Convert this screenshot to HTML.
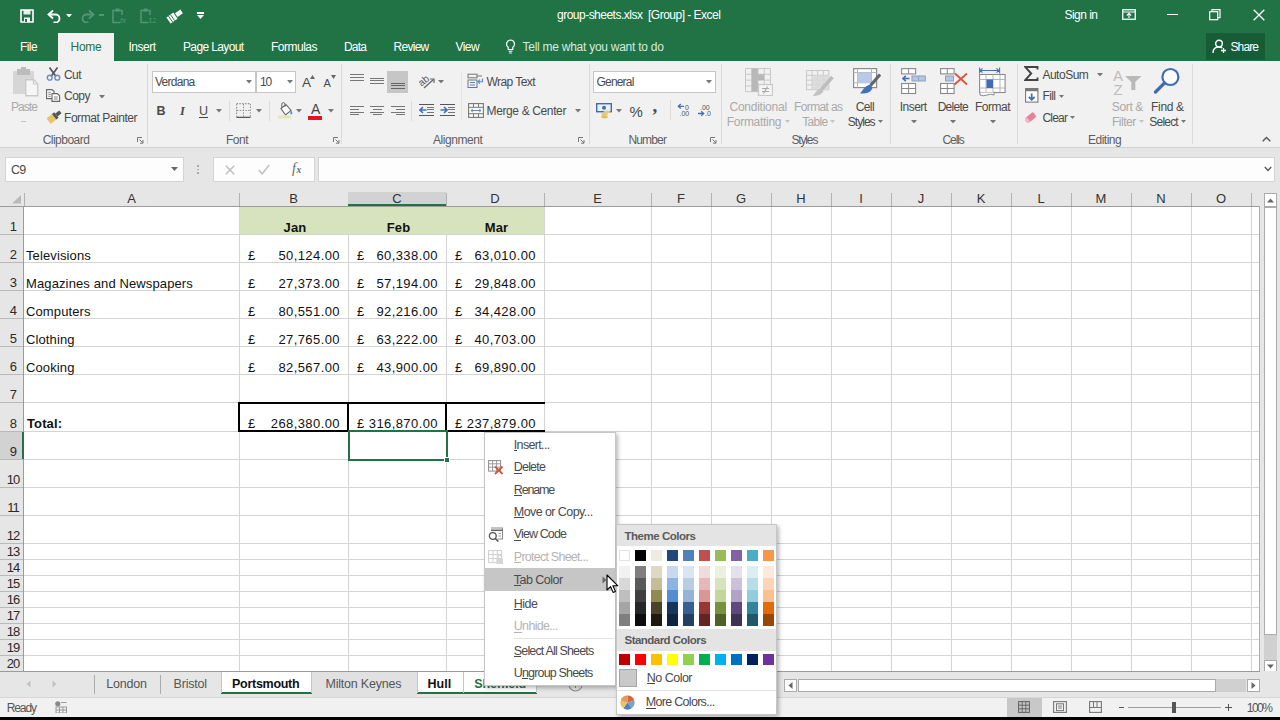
<!DOCTYPE html><html><head><meta charset="utf-8"><title>Excel</title><style>
*{box-sizing:border-box;margin:0;padding:0}
html,body{width:1280px;height:720px;overflow:hidden;background:#fff}
body{font-family:"Liberation Sans",sans-serif;font-size:12px;color:#444;position:relative}
.a{position:absolute}
.t{position:absolute;white-space:nowrap;line-height:1}
.w{color:#fff}
.g{color:#444}
.d{color:#a6a6a6}
.vl{position:absolute;width:1px;background:#d4d4d4}
.hl{position:absolute;height:1px;background:#d4d4d4}
.cell{position:absolute;white-space:nowrap;line-height:1;color:#111;font-size:13px;letter-spacing:0.12px}
.num{position:absolute;white-space:nowrap;line-height:1;color:#111;font-size:13px;letter-spacing:0.42px;text-align:right}
.rh{position:absolute;left:1px;width:24px;text-align:center;font-size:13px;color:#2a2a2a;line-height:1;letter-spacing:-0.9px}
.ch{position:absolute;text-align:center;font-size:13px;color:#333;line-height:1;top:192.1px}
.mi{position:absolute;left:514px;font-size:12.5px;color:#444;white-space:nowrap;line-height:1}
.sw{position:absolute;width:11px}
</style></head><body>
<div class="a" style="left:0px;top:0px;width:1280px;height:61px;background:#217346;"></div>
<div class="t" style="left:557px;top:8.9px;font-size:12px;color:#fff;letter-spacing:-0.51px;white-space:pre;">group-sheets.xlsx  [Group] - Excel</div>
<div class="t" style="left:1064.5px;top:8.9px;font-size:12px;color:#fff;letter-spacing:-0.53px;">Sign in</div>
<svg class="a" style="left:20px;top:9px" width="14" height="14" viewBox="0 0 14 14"><path d="M1 1h12v12h-12z" fill="none" stroke="#fff" stroke-width="1.6"/><rect x="3.5" y="1" width="7" height="4.5" fill="#fff" opacity=".9"/><rect x="4" y="8.5" width="6" height="4.5" fill="#fff"/><rect x="5" y="10" width="2" height="3" fill="#217346"/></svg>
<svg class="a" style="left:47px;top:9px" width="15" height="14" viewBox="0 0 15 14"><path d="M2 5.5h6.5a4 4 0 0 1 0 8h-2" fill="none" stroke="#fff" stroke-width="1.8"/><path d="M6 1.5l-4.5 4 4.5 4" fill="none" stroke="#fff" stroke-width="1.8"/></svg>
<svg class="a" style="left:66.0px;top:13.8px" width="6.0" height="3.5" viewBox="0 0 6.0 3.5"><path d="M0 0h6.0l-3.0 3.5z" fill="#fff"/></svg>
<svg class="a" style="left:80px;top:9px" width="15" height="14" viewBox="0 0 15 14"><path d="M13 5.5h-6.5a4 4 0 0 0 0 8h2" fill="none" stroke="#559577" stroke-width="1.8"/><path d="M9 1.5l4.5 4-4.5 4" fill="none" stroke="#559577" stroke-width="1.8"/></svg>
<div class="a" style="left:99px;top:14px;width:5px;height:2px;background:#559577;"></div>
<svg class="a" style="left:112px;top:8px" width="16" height="16" viewBox="0 0 16 16"><rect x="1" y="2.5" width="9" height="12" fill="none" stroke="#559577" stroke-width="1.5"/><rect x="3.5" y="0.5" width="4" height="3" fill="#559577"/><rect x="8" y="7" width="8" height="9" fill="#217346"/><text x="8" y="15" font-size="8" font-family="Liberation Sans" font-style="italic" fill="#559577">fx</text></svg>
<svg class="a" style="left:140px;top:8px" width="16" height="16" viewBox="0 0 16 16"><rect x="1" y="2.5" width="9" height="12" fill="none" stroke="#559577" stroke-width="1.5"/><rect x="3.5" y="0.5" width="4" height="3" fill="#559577"/><rect x="8" y="7" width="8" height="9" fill="#217346"/><text x="8" y="15" font-size="8" font-family="Liberation Sans" font-style="italic" fill="#559577">12</text></svg>
<svg class="a" style="left:166px;top:8px" width="17" height="16" viewBox="0 0 17 16"><g transform="rotate(-35 8.5 8)"><rect x="1" y="4.5" width="8.5" height="7.5" fill="#fff"/><rect x="10.5" y="6" width="6.5" height="4.5" fill="#fff"/><path d="M3.5 4.5v7.5M6 4.5v7.5" stroke="#217346" stroke-width=".9"/></g></svg>
<div class="a" style="left:197px;top:12px;width:7px;height:1.5px;background:#fff;"></div>
<svg class="a" style="left:197.0px;top:15.0px" width="7" height="4" viewBox="0 0 7 4"><path d="M0 0h7l-3.5 4z" fill="#fff"/></svg>
<svg class="a" style="left:1122px;top:9px" width="14" height="11" viewBox="0 0 14 11"><rect x=".75" y=".75" width="12.5" height="9.5" fill="none" stroke="#fff" stroke-width="1.3"/><path d="M.75 3h12.5" stroke="#fff" stroke-width="1"/><path d="M7 9V4.5M4.8 6.5L7 4.3l2.2 2.2" fill="none" stroke="#fff" stroke-width="1.1"/></svg>
<div class="a" style="left:1167px;top:14px;width:11px;height:1.3px;background:#fff;"></div>
<svg class="a" style="left:1209px;top:9px" width="12" height="12" viewBox="0 0 12 12"><rect x=".7" y="2.7" width="8" height="8" fill="none" stroke="#fff" stroke-width="1.2"/><path d="M3 2.7V.7h8v8H8.7" fill="none" stroke="#fff" stroke-width="1.2"/></svg>
<svg class="a" style="left:1253px;top:9px" width="12" height="12" viewBox="0 0 12 12"><path d="M.7.7l10.6 10.6M11.3.7L.7 11.3" stroke="#fff" stroke-width="1.3"/></svg>
<div class="a" style="left:58px;top:33px;width:56px;height:29px;background:#f1f1f1;"></div>
<div class="t" style="left:20px;top:40.6px;font-size:12px;color:#fff;letter-spacing:-0.58px;">File</div>
<div class="t" style="left:70.5px;top:40.6px;font-size:12px;color:#217346;letter-spacing:-0.25px;">Home</div>
<div class="t" style="left:128.5px;top:40.6px;font-size:12px;color:#fff;letter-spacing:-0.5px;">Insert</div>
<div class="t" style="left:183px;top:40.6px;font-size:12px;color:#fff;letter-spacing:-0.63px;">Page Layout</div>
<div class="t" style="left:271px;top:40.6px;font-size:12px;color:#fff;letter-spacing:-0.5px;">Formulas</div>
<div class="t" style="left:344px;top:40.6px;font-size:12px;color:#fff;letter-spacing:-0.84px;">Data</div>
<div class="t" style="left:393.5px;top:40.6px;font-size:12px;color:#fff;letter-spacing:-0.72px;">Review</div>
<div class="t" style="left:455.5px;top:40.6px;font-size:12px;color:#fff;letter-spacing:-0.57px;">View</div>
<div class="t" style="left:522.5px;top:40.6px;font-size:12px;color:#d6eadd;letter-spacing:-0.26px;">Tell me what you want to do</div>
<svg class="a" style="left:505px;top:39px" width="11" height="15" viewBox="0 0 11 15"><path d="M5.5 1a4 4 0 0 1 2.3 7.2v2.3h-4.6v-2.3a4 4 0 0 1 2.3-7.2z" fill="none" stroke="#fff" stroke-width="1.2"/><path d="M3.6 12.3h3.8M4.2 14h2.6" stroke="#fff" stroke-width="1.1"/></svg>
<div class="a" style="left:1206px;top:33px;width:59px;height:27px;background:#185c37;"></div>
<svg class="a" style="left:1212px;top:39px" width="15" height="15" viewBox="0 0 15 15"><circle cx="7" cy="4.5" r="3.3" fill="none" stroke="#fff" stroke-width="1.4"/><path d="M1 14c0-4 2.5-6 6-6 1.5 0 2.5.4 3.3 1" fill="none" stroke="#fff" stroke-width="1.4"/><path d="M11.5 9v5M9 11.5h5" stroke="#fff" stroke-width="1.3"/></svg>
<div class="t" style="left:1230.5px;top:40.6px;font-size:12px;color:#fff;letter-spacing:-0.9px;">Share</div>
<div class="a" style="left:0px;top:61px;width:1280px;height:86px;background:#f1f1f1;"></div>
<div class="a" style="left:0px;top:147px;width:1280px;height:1px;background:#d2d2d2;"></div>
<div class="a" style="left:0px;top:148px;width:1280px;height:43px;background:#e6e6e6;"></div>
<div class="a" style="left:12.5px;top:71px;width:21px;height:23px;background:#d6d6d6;"></div>
<div class="a" style="left:17px;top:68.5px;width:13px;height:6px;background:#bcbcbc;"></div>
<div class="a" style="left:21px;top:66.5px;width:5px;height:3px;background:#bcbcbc;"></div>
<svg class="a" style="left:25px;top:79px" width="14" height="18" viewBox="0 0 14 18"><path d="M.75.75h8l4 4v12h-12z" fill="#f6f6f6" stroke="#c9c9c9" stroke-width="1.3"/><path d="M8.5.75v4.2h4.2" fill="none" stroke="#c9c9c9" stroke-width="1.1"/></svg>
<div class="t" style="left:11px;top:101.1px;font-size:12px;color:#a9a9a9;letter-spacing:-0.94px;">Paste</div>
<div class="a" style="left:21px;top:121px;width:5px;height:1.3px;background:#c4c4c4;"></div>
<svg class="a" style="left:46px;top:66px" width="15" height="15" viewBox="0 0 15 15"><path d="M3.5 1.5l6.5 9M11.5 1.5L5 10.5" stroke="#555" stroke-width="1.7" fill="none"/><circle cx="3.7" cy="11.7" r="2.4" fill="none" stroke="#6a8fc4" stroke-width="1.4"/><circle cx="11.3" cy="11.7" r="2.4" fill="none" stroke="#6a8fc4" stroke-width="1.4"/></svg>
<div class="t" style="left:64px;top:68.8px;font-size:12px;color:#4a4a4a;letter-spacing:-0.56px;">Cut</div>
<svg class="a" style="left:46px;top:89px" width="15" height="13" viewBox="0 0 15 13"><path d="M.6.6h5.5l2 2v7h-7.5z" fill="#fff" stroke="#666" stroke-width="1.1"/><path d="M6 4.6h5.4l2.2 2.2v5.6H6z" fill="#fff" stroke="#666" stroke-width="1.1"/><path d="M2.3 3.3h2.5M2.3 5.3h2.5M2.3 7.3h2.5M7.8 8h4M7.8 10h4" stroke="#777" stroke-width=".9"/></svg>
<div class="t" style="left:64px;top:90.1px;font-size:12px;color:#4a4a4a;letter-spacing:-0.5px;">Copy</div>
<svg class="a" style="left:98.5px;top:94.5px" width="6.0" height="3.5" viewBox="0 0 6.0 3.5"><path d="M0 0h6.0l-3.0 3.5z" fill="#777"/></svg>
<svg class="a" style="left:47px;top:109px" width="15" height="15" viewBox="0 0 15 15"><g transform="rotate(-38 7.5 7.5)"><rect x="0" y="4" width="7" height="7" fill="#e8c466"/><rect x="7" y="4" width="3" height="7" fill="#555"/><rect x="10" y="5.7" width="5" height="3.6" fill="#555"/></g></svg>
<div class="t" style="left:64px;top:111.8px;font-size:12px;color:#4a4a4a;letter-spacing:-0.45px;">Format Painter</div>
<div class="t" style="left:42.7px;top:133.5px;font-size:12px;color:#5e5e5e;letter-spacing:-0.53px;">Clipboard</div>
<svg class="a" style="left:137px;top:137px" width="7" height="7" viewBox="0 0 7 7"><path d="M.5 5V.5H5" fill="none" stroke="#777" stroke-width="1"/><path d="M2.5 2.5L6 6M6 3v3.2H3" fill="none" stroke="#777" stroke-width="1"/></svg>
<div class="a" style="left:146.5px;top:64px;width:1px;height:80px;background:#dadada;"></div>
<div class="a" style="left:152px;top:71px;width:104px;height:22px;background:#fff;border:1px solid #c6c6c6"></div>
<div class="a" style="left:256px;top:71px;width:40px;height:22px;background:#fff;border:1px solid #c6c6c6"></div>
<div class="t" style="left:155px;top:76.4px;font-size:12px;color:#4a4a4a;letter-spacing:-0.74px;">Verdana</div>
<svg class="a" style="left:245.5px;top:80.2px" width="6.0" height="3.5" viewBox="0 0 6.0 3.5"><path d="M0 0h6.0l-3.0 3.5z" fill="#777"/></svg>
<div class="t" style="left:260px;top:76.4px;font-size:12px;color:#4a4a4a;letter-spacing:-1.17px;">10</div>
<svg class="a" style="left:286.5px;top:80.2px" width="6.0" height="3.5" viewBox="0 0 6.0 3.5"><path d="M0 0h6.0l-3.0 3.5z" fill="#777"/></svg>
<div class="t" style="left:302px;top:75.9px;font-size:13.5px;color:#4a4a4a;letter-spacing:0.5px;">A</div>
<svg class="a" style="left:310px;top:74.5px" width="5" height="4" viewBox="0 0 5 4"><path d="M0 4L2.5 0L5 4z" fill="#666"/></svg>
<div class="t" style="left:323.5px;top:78.1px;font-size:11px;color:#4a4a4a;letter-spacing:0.16px;">A</div>
<svg class="a" style="left:330.5px;top:74.5px" width="5" height="4" viewBox="0 0 5 4"><path d="M0 0h5L2.5 4z" fill="#666"/></svg>
<div class="t" style="left:156.5px;top:104.9px;font-size:12.5px;color:#4a4a4a;letter-spacing:-0.53px;font-weight:700;">B</div>
<div class="t" style="left:180px;top:104.9px;font-size:12.5px;color:#4a4a4a;letter-spacing:0px;font-weight:700;font-style:italic;font-family:'Liberation Serif',serif;">I</div>
<div class="t" style="left:199px;top:104.9px;font-size:12.5px;color:#4a4a4a;letter-spacing:-0.53px;">U</div>
<div class="a" style="left:199px;top:116.5px;width:9px;height:1.2px;background:#444;"></div>
<svg class="a" style="left:215.5px;top:109.2px" width="6.0" height="3.5" viewBox="0 0 6.0 3.5"><path d="M0 0h6.0l-3.0 3.5z" fill="#777"/></svg>
<div class="a" style="left:229px;top:101px;width:1px;height:20px;background:#dcdcdc;"></div>
<svg class="a" style="left:236px;top:103px" width="15" height="15" viewBox="0 0 15 15"><rect x=".6" y=".6" width="13.8" height="13.8" fill="none" stroke="#8c8c8c" stroke-width="1.1" stroke-dasharray="1.4 1.4"/><path d="M7.5 1v13M1 7.5h13" stroke="#8c8c8c" stroke-width="1" stroke-dasharray="1.4 1.4"/><path d="M.5 14.4h14" stroke="#555" stroke-width="1.2"/></svg>
<svg class="a" style="left:256.0px;top:109.2px" width="6.0" height="3.5" viewBox="0 0 6.0 3.5"><path d="M0 0h6.0l-3.0 3.5z" fill="#777"/></svg>
<div class="a" style="left:269px;top:101px;width:1px;height:20px;background:#dcdcdc;"></div>
<svg class="a" style="left:277px;top:102px" width="17" height="17" viewBox="0 0 17 17"><path d="M4 6.5l5-4 5 6-5.5 4.5z" fill="#fff" stroke="#666" stroke-width="1.1"/><path d="M8 5V2.2a1.6 1.6 0 0 0-3.2 0v3.5" fill="none" stroke="#666" stroke-width="1"/><path d="M14 8.5c1.2 1.6 1.7 2.7 1 3.6-.8.8-2 .2-1.7-1z" fill="#5b86c0"/><rect x="1" y="13.5" width="13" height="3" fill="#e3e7b8"/></svg>
<svg class="a" style="left:296.0px;top:109.2px" width="6.0" height="3.5" viewBox="0 0 6.0 3.5"><path d="M0 0h6.0l-3.0 3.5z" fill="#777"/></svg>
<div class="t" style="left:311px;top:101.6px;font-size:14px;color:#444;letter-spacing:0.16px;">A</div>
<div class="a" style="left:308px;top:116px;width:14px;height:3.6px;background:#e5141a;"></div>
<svg class="a" style="left:328.0px;top:109.2px" width="6.0" height="3.5" viewBox="0 0 6.0 3.5"><path d="M0 0h6.0l-3.0 3.5z" fill="#777"/></svg>
<div class="t" style="left:226.0px;top:133.5px;font-size:12px;color:#5e5e5e;letter-spacing:-0.5px;">Font</div>
<svg class="a" style="left:333px;top:137px" width="7" height="7" viewBox="0 0 7 7"><path d="M.5 5V.5H5" fill="none" stroke="#777" stroke-width="1"/><path d="M2.5 2.5L6 6M6 3v3.2H3" fill="none" stroke="#777" stroke-width="1"/></svg>
<div class="a" style="left:341px;top:64px;width:1px;height:80px;background:#dadada;"></div>
<div class="a" style="left:349.5px;top:74px;width:14px;height:1.1px;background:#777;"></div>
<div class="a" style="left:349.5px;top:76.8px;width:14px;height:1.1px;background:#777;"></div>
<div class="a" style="left:349.5px;top:79.6px;width:14px;height:1.1px;background:#777;"></div>
<div class="a" style="left:370px;top:77.6px;width:14px;height:1.1px;background:#777;"></div>
<div class="a" style="left:370px;top:80.4px;width:14px;height:1.1px;background:#777;"></div>
<div class="a" style="left:370px;top:83.2px;width:14px;height:1.1px;background:#777;"></div>
<div class="a" style="left:387px;top:71px;width:21px;height:22px;background:#c6c6c6;"></div>
<div class="a" style="left:390.5px;top:82.6px;width:14px;height:1.1px;background:#666;"></div>
<div class="a" style="left:390.5px;top:85.4px;width:14px;height:1.1px;background:#666;"></div>
<div class="a" style="left:390.5px;top:88.2px;width:14px;height:1.1px;background:#666;"></div>
<div class="a" style="left:411px;top:101px;width:1px;height:20px;background:#dcdcdc;"></div>
<svg class="a" style="left:418px;top:73px" width="18" height="17" viewBox="0 0 18 17"><text x="1" y="11" font-size="10" font-family="Liberation Sans" fill="#555" transform="rotate(-40 6 9)">ab</text><path d="M6 15L15.5 6.5" stroke="#666" stroke-width="1.3"/><path d="M12 6h4v4" fill="none" stroke="#666" stroke-width="1.2"/></svg>
<svg class="a" style="left:437.5px;top:79.8px" width="6.0" height="3.5" viewBox="0 0 6.0 3.5"><path d="M0 0h6.0l-3.0 3.5z" fill="#777"/></svg>
<div class="a" style="left:461px;top:72px;width:1px;height:48px;background:#e4e4e4;"></div>
<svg class="a" style="left:467px;top:73px" width="17" height="16" viewBox="0 0 17 16"><rect x="1" y="1.2" width="9" height="3.6" fill="none" stroke="#777" stroke-width="1"/><path d="M10 3h5" stroke="#777" stroke-width="1"/><rect x="1" y="7" width="9" height="7.5" fill="#eaf1fb" stroke="#777" stroke-width="1"/><path d="M3 9.5h5M3 12h5" stroke="#5b86c0" stroke-width="1"/><path d="M15.5 5.5v3.2h-4" fill="none" stroke="#5b86c0" stroke-width="1.1"/><path d="M13 6.7l-2 2 2 2" fill="none" stroke="#5b86c0" stroke-width="1.1"/></svg>
<div class="t" style="left:486.5px;top:76.4px;font-size:12px;color:#4a4a4a;letter-spacing:-0.56px;">Wrap Text</div>
<div class="a" style="left:349.5px;top:106px;width:14px;height:1.1px;background:#777;"></div>
<div class="a" style="left:349.5px;top:108.8px;width:9px;height:1.1px;background:#777;"></div>
<div class="a" style="left:349.5px;top:111.6px;width:14px;height:1.1px;background:#777;"></div>
<div class="a" style="left:349.5px;top:114.4px;width:9px;height:1.1px;background:#777;"></div>
<div class="a" style="left:370.0px;top:106px;width:14px;height:1.1px;background:#777;"></div>
<div class="a" style="left:372.5px;top:108.8px;width:9px;height:1.1px;background:#777;"></div>
<div class="a" style="left:370.0px;top:111.6px;width:14px;height:1.1px;background:#777;"></div>
<div class="a" style="left:372.5px;top:114.4px;width:9px;height:1.1px;background:#777;"></div>
<div class="a" style="left:390.5px;top:106px;width:14px;height:1.1px;background:#777;"></div>
<div class="a" style="left:395.5px;top:108.8px;width:9px;height:1.1px;background:#777;"></div>
<div class="a" style="left:390.5px;top:111.6px;width:14px;height:1.1px;background:#777;"></div>
<div class="a" style="left:395.5px;top:114.4px;width:9px;height:1.1px;background:#777;"></div>
<div class="a" style="left:418.5px;top:103.7px;width:15.5px;height:1.1px;background:#555;"></div>
<div class="a" style="left:418.5px;top:114.6px;width:15.5px;height:1.1px;background:#555;"></div>
<div class="a" style="left:426.5px;top:106.6px;width:7.5px;height:1.1px;background:#777;"></div>
<div class="a" style="left:426.5px;top:109.1px;width:7.5px;height:1.1px;background:#777;"></div>
<div class="a" style="left:426.5px;top:111.6px;width:7.5px;height:1.1px;background:#777;"></div>
<svg class="a" style="left:418.5px;top:105.5px" width="8" height="8" viewBox="0 0 8 8"><path d="M7.5 4H1.2M4 1L1 4l3 3" fill="none" stroke="#4472b8" stroke-width="1.6"/></svg>
<div class="a" style="left:439.5px;top:103.7px;width:15.5px;height:1.1px;background:#555;"></div>
<div class="a" style="left:439.5px;top:114.6px;width:15.5px;height:1.1px;background:#555;"></div>
<div class="a" style="left:447.5px;top:106.6px;width:7.5px;height:1.1px;background:#777;"></div>
<div class="a" style="left:447.5px;top:109.1px;width:7.5px;height:1.1px;background:#777;"></div>
<div class="a" style="left:447.5px;top:111.6px;width:7.5px;height:1.1px;background:#777;"></div>
<svg class="a" style="left:439.5px;top:105.5px" width="8" height="8" viewBox="0 0 8 8"><path d="M.5 4h6.3M4 1l3 3-3 3" fill="none" stroke="#4472b8" stroke-width="1.6"/></svg>
<svg class="a" style="left:467.5px;top:102.5px" width="16" height="15" viewBox="0 0 16 15"><rect x=".6" y=".6" width="14.8" height="13.8" fill="#fafafa" stroke="#777" stroke-width="1.1"/><path d="M.6 4.3h14.8M.6 10.7h14.8M5.5.6v3.7M10.5.6v3.7M5.5 10.7v3.7M10.5 10.7v3.7" stroke="#777" stroke-width="1"/><path d="M3 7.5h10M4.8 6l-1.8 1.5 1.8 1.5M11.2 6l1.8 1.5-1.8 1.5" fill="none" stroke="#5b86c0" stroke-width="1"/></svg>
<div class="t" style="left:486.5px;top:105.1px;font-size:12px;color:#4a4a4a;letter-spacing:-0.37px;">Merge &amp; Center</div>
<svg class="a" style="left:574.5px;top:109.2px" width="6.0" height="3.5" viewBox="0 0 6.0 3.5"><path d="M0 0h6.0l-3.0 3.5z" fill="#777"/></svg>
<div class="t" style="left:433px;top:133.5px;font-size:12px;color:#5e5e5e;letter-spacing:-0.43px;">Alignment</div>
<svg class="a" style="left:578px;top:137px" width="7" height="7" viewBox="0 0 7 7"><path d="M.5 5V.5H5" fill="none" stroke="#777" stroke-width="1"/><path d="M2.5 2.5L6 6M6 3v3.2H3" fill="none" stroke="#777" stroke-width="1"/></svg>
<div class="a" style="left:588.5px;top:64px;width:1px;height:80px;background:#dadada;"></div>
<div class="a" style="left:593px;top:71px;width:123px;height:22px;background:#fff;border:1px solid #c6c6c6"></div>
<div class="t" style="left:596.5px;top:76.4px;font-size:12px;color:#4a4a4a;letter-spacing:-0.81px;">General</div>
<svg class="a" style="left:706.0px;top:80.2px" width="6.0" height="3.5" viewBox="0 0 6.0 3.5"><path d="M0 0h6.0l-3.0 3.5z" fill="#777"/></svg>
<svg class="a" style="left:595.5px;top:102.5px" width="17" height="16" viewBox="0 0 17 16"><rect x=".7" y=".7" width="14.6" height="8" fill="#eaf1fb" stroke="#3d6cb0" stroke-width="1.4"/><circle cx="8" cy="4.7" r="2" fill="#3d6cb0"/><ellipse cx="11" cy="9" rx="3.3" ry="1.4" fill="#e8c877"/><ellipse cx="8.5" cy="11.5" rx="3.3" ry="1.4" fill="#e8c877"/><ellipse cx="8.5" cy="14" rx="3.3" ry="1.4" fill="#e2bd62"/></svg>
<svg class="a" style="left:616.0px;top:109.2px" width="6.0" height="3.5" viewBox="0 0 6.0 3.5"><path d="M0 0h6.0l-3.0 3.5z" fill="#777"/></svg>
<div class="t" style="left:629.5px;top:103.7px;font-size:15px;color:#4a4a4a;letter-spacing:-1.34px;">%</div>
<div class="t" style="left:652.5px;top:96.2px;font-size:19px;color:#4a4a4a;letter-spacing:0px;font-weight:700;font-family:'Liberation Serif',serif;">,</div>
<div class="a" style="left:670px;top:100px;width:1px;height:20px;background:#dcdcdc;"></div>
<svg class="a" style="left:677px;top:103px" width="15" height="14" viewBox="0 0 15 14"><path d="M7 3.3H1.5M3.8 1L1.3 3.3l2.5 2.3" fill="none" stroke="#4472b8" stroke-width="1.3"/><text x="8" y="6.5" font-size="7" font-family="Liberation Sans" fill="#555">0</text><text x="2.5" y="13" font-size="7" font-family="Liberation Sans" fill="#555">.00</text></svg>
<svg class="a" style="left:697px;top:103px" width="15" height="14" viewBox="0 0 15 14"><text x="3" y="6.5" font-size="7" font-family="Liberation Sans" fill="#555">.00</text><path d="M1 10.5h5.5M4.2 8.2l2.5 2.3-2.5 2.3" fill="none" stroke="#4472b8" stroke-width="1.3"/><text x="8" y="13" font-size="7" font-family="Liberation Sans" fill="#555">.0</text></svg>
<div class="t" style="left:628.5px;top:133.5px;font-size:12px;color:#5e5e5e;letter-spacing:-0.86px;">Number</div>
<svg class="a" style="left:709.5px;top:137px" width="7" height="7" viewBox="0 0 7 7"><path d="M.5 5V.5H5" fill="none" stroke="#777" stroke-width="1"/><path d="M2.5 2.5L6 6M6 3v3.2H3" fill="none" stroke="#777" stroke-width="1"/></svg>
<div class="a" style="left:720.5px;top:64px;width:1px;height:80px;background:#dadada;"></div>
<svg class="a" style="left:745px;top:68px" width="28" height="28" viewBox="0 0 28 28"><path d="M0.5 0.5h25" stroke="#c8c8c8" stroke-width="1"/><path d="M0.5 6.3h25" stroke="#c8c8c8" stroke-width="1"/><path d="M0.5 12.1h25" stroke="#c8c8c8" stroke-width="1"/><path d="M0.5 17.9h25" stroke="#c8c8c8" stroke-width="1"/><path d="M0.5 23.7h25" stroke="#c8c8c8" stroke-width="1"/><path d="M0.5 .5v23.2" stroke="#c8c8c8" stroke-width="1"/><path d="M6.75 .5v23.2" stroke="#c8c8c8" stroke-width="1"/><path d="M13.0 .5v23.2" stroke="#c8c8c8" stroke-width="1"/><path d="M19.25 .5v23.2" stroke="#c8c8c8" stroke-width="1"/><path d="M25.5 .5v23.2" stroke="#c8c8c8" stroke-width="1"/><rect x="6.7" y="0.5" width="6.2" height="23" fill="#b8b8b8"/><rect x="12.9" y="6.3" width="6.2" height="5.8" fill="#b8b8b8"/><rect x="13.5" y="16.5" width="14" height="11" fill="#f4f4f4" stroke="#c8c8c8" stroke-width="1.2"/><path d="M17 20.5h7M17 23.5h7M22.5 18.5l-4 7" stroke="#a8a8a8" stroke-width="1.1"/></svg>
<div class="t" style="left:729.5px;top:100.6px;font-size:12px;color:#a9a9a9;letter-spacing:-0.25px;">Conditional</div>
<div class="t" style="left:726.8px;top:115.6px;font-size:12px;color:#a9a9a9;letter-spacing:-0.3px;">Formatting</div>
<svg class="a" style="left:784.5px;top:120.0px" width="5" height="3" viewBox="0 0 5 3"><path d="M0 0h5l-2.5 3z" fill="#c4c4c4"/></svg>
<svg class="a" style="left:806px;top:70px" width="28" height="27" viewBox="0 0 28 27"><path d="M0.5 0.5h22.5" stroke="#c8c8c8" stroke-width="1"/><path d="M0.5 5.3h22.5" stroke="#c8c8c8" stroke-width="1"/><path d="M0.5 10.1h22.5" stroke="#c8c8c8" stroke-width="1"/><path d="M0.5 14.899999999999999h22.5" stroke="#c8c8c8" stroke-width="1"/><path d="M0.5 19.7h22.5" stroke="#c8c8c8" stroke-width="1"/><path d="M0.5 .5v19.5" stroke="#c8c8c8" stroke-width="1"/><path d="M6.1 .5v19.5" stroke="#c8c8c8" stroke-width="1"/><path d="M11.7 .5v19.5" stroke="#c8c8c8" stroke-width="1"/><path d="M17.299999999999997 .5v19.5" stroke="#c8c8c8" stroke-width="1"/><path d="M22.9 .5v19.5" stroke="#c8c8c8" stroke-width="1"/><rect x="6" y="5.3" width="17" height="14.5" fill="#d8d8d8" opacity=".8"/><path d="M26.5 7L15 20" stroke="#bdbdbd" stroke-width="3.4"/><path d="M15.5 18.5c-3 0-5 2-8.5 7.500 4 0 8.500-1 10.500-5z" fill="#c2c2c2"/></svg>
<div class="t" style="left:794px;top:100.6px;font-size:12px;color:#a9a9a9;letter-spacing:-0.62px;">Format as</div>
<div class="t" style="left:802.3px;top:115.6px;font-size:12px;color:#a9a9a9;letter-spacing:-0.68px;">Table</div>
<svg class="a" style="left:830.0px;top:120.0px" width="5" height="3" viewBox="0 0 5 3"><path d="M0 0h5l-2.5 3z" fill="#c4c4c4"/></svg>
<svg class="a" style="left:853px;top:68px" width="28" height="27" viewBox="0 0 28 27"><rect x=".6" y=".6" width="23" height="19" fill="#fff" stroke="#8a8a8a" stroke-width="1.2"/><path d="M.6 4.5h23M.6 14.8h23M4.5.6v19M18.5.6v19" stroke="#b5b5b5" stroke-width="1"/><rect x="4.5" y="4.5" width="14" height="10.300" fill="#b7cbe8"/><path d="M27 6.500L17.500 17.500" stroke="#666" stroke-width="3.2"/><path d="M17.500 17c-3-.5-5.500 1.500-10.500 8.500 5 .5 10.500-.5 12.500-5.500z" fill="#4472b8"/></svg>
<div class="t" style="left:855.7px;top:100.6px;font-size:12px;color:#4a4a4a;letter-spacing:-0.59px;">Cell</div>
<div class="t" style="left:847.7px;top:115.6px;font-size:12px;color:#4a4a4a;letter-spacing:-0.95px;">Styles</div>
<svg class="a" style="left:878.0px;top:120.0px" width="5" height="3" viewBox="0 0 5 3"><path d="M0 0h5l-2.5 3z" fill="#777"/></svg>
<div class="t" style="left:791.4px;top:133.5px;font-size:12px;color:#5e5e5e;letter-spacing:-1.13px;">Styles</div>
<div class="a" style="left:889.5px;top:64px;width:1px;height:80px;background:#dadada;"></div>
<svg class="a" style="left:901px;top:68px" width="26" height="27" viewBox="0 0 26 27"><rect x=".6" y=".6" width="14" height="5.300" fill="#fff" stroke="#8a8a8a" stroke-width="1.1"/><path d="M7.6.6v5.300" stroke="#8a8a8a" stroke-width="1"/><rect x="11" y="8" width="13.300" height="5" fill="#b7c7e0" stroke="#8aa0c4" stroke-width="1"/><path d="M17.600 8v5" stroke="#8aa0c4" stroke-width="1"/><path d="M8.500 10.500H2M4.800 7.800L2 10.500l2.800 2.700" fill="none" stroke="#4472b8" stroke-width="1.700"/><rect x=".6" y="15.500" width="14" height="10" fill="#fff" stroke="#8a8a8a" stroke-width="1.1"/><path d="M7.600 15.500v10M.6 20.500h14" stroke="#8a8a8a" stroke-width="1"/></svg>
<div class="t" style="left:899.8px;top:100.8px;font-size:12px;color:#4a4a4a;letter-spacing:-0.55px;">Insert</div>
<svg class="a" style="left:910.5px;top:119.5px" width="6.0" height="3.5" viewBox="0 0 6.0 3.5"><path d="M0 0h6.0l-3.0 3.5z" fill="#777"/></svg>
<svg class="a" style="left:940px;top:68px" width="28" height="27" viewBox="0 0 28 27"><rect x=".6" y=".6" width="13.500" height="5.300" fill="#fff" stroke="#8a8a8a" stroke-width="1.1"/><path d="M7.300.6v5.300" stroke="#8a8a8a" stroke-width="1"/><rect x="5.500" y="8" width="8" height="5" fill="#b7c7e0" stroke="#8aa0c4" stroke-width="1"/><rect x=".6" y="15.500" width="13.500" height="10" fill="#fff" stroke="#8a8a8a" stroke-width="1.1"/><path d="M7.300 15.500v10M.6 20.500h13.500" stroke="#8a8a8a" stroke-width="1"/><path d="M15 5.500l12 11M27 5.500L14.500 16.500" stroke="#d8553a" stroke-width="1.800"/></svg>
<div class="t" style="left:937.7px;top:100.8px;font-size:12px;color:#4a4a4a;letter-spacing:-0.73px;">Delete</div>
<svg class="a" style="left:949.5px;top:119.5px" width="6.0" height="3.5" viewBox="0 0 6.0 3.5"><path d="M0 0h6.0l-3.0 3.5z" fill="#777"/></svg>
<svg class="a" style="left:979px;top:66.5px" width="27" height="30" viewBox="0 0 27 30"><path d="M1 3.500h19M3.500 1.300L1.200 3.500l2.300 2.200M17.500 1.300l2.300 2.200-2.300 2.200M.6.500v6M20.600.5v6" fill="none" stroke="#4472b8" stroke-width="1.100"/><rect x=".6" y="7.500" width="25.500" height="18" fill="#fff" stroke="#8a8a8a" stroke-width="1.1"/><path d="M.6 12.500h25.500M.6 21h25.500M7 7.500v18M14 7.500v18M21 7.500v18" stroke="#b5b5b5" stroke-width="1"/><rect x="7.500" y="12.500" width="6.500" height="8.500" fill="#3f6cb5"/><path d="M1 25.500v2.500q3.500 1.500 7 0t7 0v-2.500" fill="#fff" stroke="#8a8a8a" stroke-width="1"/></svg>
<div class="t" style="left:975px;top:100.8px;font-size:12px;color:#4a4a4a;letter-spacing:-0.5px;">Format</div>
<svg class="a" style="left:989.7px;top:119.5px" width="6.0" height="3.5" viewBox="0 0 6.0 3.5"><path d="M0 0h6.0l-3.0 3.5z" fill="#777"/></svg>
<div class="t" style="left:942.4px;top:133.5px;font-size:12px;color:#5e5e5e;letter-spacing:-1.05px;">Cells</div>
<div class="a" style="left:1017px;top:64px;width:1px;height:80px;background:#dadada;"></div>
<svg class="a" style="left:1024px;top:66px" width="15" height="15" viewBox="0 0 15 15"><path d="M13.500 3.500V1H1.200l6 6.500-6 6.500h12.300v-2.500" fill="none" stroke="#444" stroke-width="1.900"/></svg>
<div class="t" style="left:1042.4px;top:68.9px;font-size:12px;color:#4a4a4a;letter-spacing:-0.48px;">AutoSum</div>
<svg class="a" style="left:1097.4px;top:72.8px" width="6.0" height="3.5" viewBox="0 0 6.0 3.5"><path d="M0 0h6.0l-3.0 3.5z" fill="#777"/></svg>
<svg class="a" style="left:1025px;top:88px" width="14" height="15" viewBox="0 0 14 15"><rect x=".6" y=".6" width="12.300" height="13.500" fill="#fff" stroke="#777" stroke-width="1.100"/><rect x=".6" y=".6" width="12.300" height="2.600" fill="#777"/><path d="M6.700 5.500v6M3.800 8.800l2.900 2.900 2.900-2.900" fill="none" stroke="#3f6cb5" stroke-width="1.700"/></svg>
<div class="t" style="left:1042.4px;top:90.1px;font-size:12px;color:#4a4a4a;letter-spacing:-0.56px;">Fill</div>
<svg class="a" style="left:1059.0px;top:94.7px" width="5" height="3" viewBox="0 0 5 3"><path d="M0 0h5l-2.5 3z" fill="#777"/></svg>
<svg class="a" style="left:1025px;top:110px" width="14" height="13" viewBox="0 0 14 13"><g transform="rotate(-38 7 6.500)"><rect x="1" y="3.500" width="9.500" height="6" rx="1" fill="#e77f9d"/><rect x="-1" y="3.500" width="3.500" height="6" rx="1" fill="#f2b6c6"/></g></svg>
<div class="t" style="left:1042.4px;top:111.8px;font-size:12px;color:#4a4a4a;letter-spacing:-0.76px;">Clear</div>
<svg class="a" style="left:1070.2px;top:116.4px" width="5" height="3" viewBox="0 0 5 3"><path d="M0 0h5l-2.5 3z" fill="#777"/></svg>
<div class="t" style="left:1113px;top:67.7px;font-size:15px;color:#bdbdbd;letter-spacing:1.49px;">A</div>
<div class="t" style="left:1113.5px;top:81.7px;font-size:15px;color:#bdbdbd;letter-spacing:1.34px;">Z</div>
<svg class="a" style="left:1124.5px;top:75.5px" width="17" height="15" viewBox="0 0 17 15"><path d="M0 0h16.500l-6.200 6v8h-4V6z" fill="#b9b9b9"/></svg>
<div class="t" style="left:1111.8px;top:100.6px;font-size:12px;color:#a9a9a9;letter-spacing:-0.36px;">Sort &amp;</div>
<div class="t" style="left:1112px;top:115.6px;font-size:12px;color:#a9a9a9;letter-spacing:-0.49px;">Filter</div>
<svg class="a" style="left:1138.5px;top:120.0px" width="5" height="3" viewBox="0 0 5 3"><path d="M0 0h5l-2.5 3z" fill="#c4c4c4"/></svg>
<svg class="a" style="left:1153px;top:66px" width="28" height="28" viewBox="0 0 28 28"><circle cx="17.400" cy="11" r="8" fill="#fdfdfd" stroke="#3f6cb5" stroke-width="2.200"/><path d="M11.500 17L2.500 26" stroke="#3f6cb5" stroke-width="3.200" stroke-linecap="round"/></svg>
<div class="t" style="left:1151.1px;top:100.6px;font-size:12px;color:#4a4a4a;letter-spacing:-0.33px;">Find &amp;</div>
<div class="t" style="left:1149.3px;top:115.6px;font-size:12px;color:#4a4a4a;letter-spacing:-0.79px;">Select</div>
<svg class="a" style="left:1181.0px;top:120.0px" width="5" height="3" viewBox="0 0 5 3"><path d="M0 0h5l-2.5 3z" fill="#777"/></svg>
<div class="t" style="left:1088px;top:133.5px;font-size:12px;color:#5e5e5e;letter-spacing:-0.5px;">Editing</div>
<div class="a" style="left:1192px;top:64px;width:1px;height:80px;background:#dadada;"></div>
<svg class="a" style="left:1262px;top:136px" width="9" height="6" viewBox="0 0 9 6"><path d="M.7 5.300L4.500 1.500l3.800 3.800" fill="none" stroke="#555" stroke-width="1.400"/></svg>
<div class="a" style="left:5px;top:157px;width:179px;height:24.5px;background:#fdfdfd;border:1px solid #d4d4d4"></div>
<div class="t" style="left:11px;top:164.1px;font-size:12.5px;color:#4a4a4a;letter-spacing:-0.74px;">C9</div>
<svg class="a" style="left:170.5px;top:166.5px" width="7" height="4" viewBox="0 0 7 4"><path d="M0 0h7l-3.5 4z" fill="#666"/></svg>
<div class="a" style="left:197px;top:165px;width:1.5px;height:1.5px;background:#a8a8a8;"></div>
<div class="a" style="left:197px;top:168.7px;width:1.5px;height:1.5px;background:#a8a8a8;"></div>
<div class="a" style="left:197px;top:172.4px;width:1.5px;height:1.5px;background:#a8a8a8;"></div>
<div class="a" style="left:212.5px;top:157px;width:102px;height:24.5px;background:#fdfdfd;border:1px solid #d4d4d4"></div>
<svg class="a" style="left:224.5px;top:165px" width="10" height="10" viewBox="0 0 10 10"><path d="M.8.8l8.400 8.400M9.200.8L.8 9.200" stroke="#bdbdbd" stroke-width="1.400"/></svg>
<svg class="a" style="left:257.5px;top:164px" width="12" height="11" viewBox="0 0 12 11"><path d="M.8 6.200l3.400 3.600L11.200 1" fill="none" stroke="#c4c4c4" stroke-width="1.700"/></svg>
<div class="t" style="left:292px;top:161.6px;font-size:14px;color:#666;letter-spacing:0px;font-style:italic;font-family:'Liberation Serif',serif;">f</div>
<div class="t" style="left:296.5px;top:166.3px;font-size:9.5px;color:#666;letter-spacing:0px;font-weight:700;font-style:italic;font-family:'Liberation Serif',serif;">x</div>
<div class="a" style="left:318px;top:157px;width:957px;height:24.5px;background:#fdfdfd;border:1px solid #d4d4d4"></div>
<svg class="a" style="left:1263.5px;top:166px" width="8" height="6" viewBox="0 0 8 6"><path d="M.8 1l3.200 3.400L7.200 1" fill="none" stroke="#555" stroke-width="1.400"/></svg>
<div class="a" style="left:0;top:191px;width:1260px;height:15px;background:#e6e6e6"></div>
<div class="a" style="left:0;top:206px;width:24px;height:465px;background:#e6e6e6"></div>
<div class="a" style="left:1260px;top:191px;width:20px;height:480px;background:#e6e6e6"></div>
<div class="a" style="left:0;top:206px;width:1260px;height:1px;background:#9b9b9b"></div>
<div class="vl" style="left:24px;top:193px;height:13px;background:#b1b1b1"></div>
<div class="vl" style="left:239px;top:207px;height:464px"></div>
<div class="vl" style="left:239px;top:193px;height:13px;background:#b1b1b1"></div>
<div class="vl" style="left:348px;top:207px;height:464px"></div>
<div class="vl" style="left:348px;top:193px;height:13px;background:#b1b1b1"></div>
<div class="vl" style="left:446px;top:207px;height:464px"></div>
<div class="vl" style="left:446px;top:193px;height:13px;background:#b1b1b1"></div>
<div class="vl" style="left:544px;top:207px;height:464px"></div>
<div class="vl" style="left:544px;top:193px;height:13px;background:#b1b1b1"></div>
<div class="vl" style="left:651px;top:207px;height:464px"></div>
<div class="vl" style="left:651px;top:193px;height:13px;background:#b1b1b1"></div>
<div class="vl" style="left:711px;top:207px;height:464px"></div>
<div class="vl" style="left:711px;top:193px;height:13px;background:#b1b1b1"></div>
<div class="vl" style="left:771px;top:207px;height:464px"></div>
<div class="vl" style="left:771px;top:193px;height:13px;background:#b1b1b1"></div>
<div class="vl" style="left:831px;top:207px;height:464px"></div>
<div class="vl" style="left:831px;top:193px;height:13px;background:#b1b1b1"></div>
<div class="vl" style="left:891px;top:207px;height:464px"></div>
<div class="vl" style="left:891px;top:193px;height:13px;background:#b1b1b1"></div>
<div class="vl" style="left:951px;top:207px;height:464px"></div>
<div class="vl" style="left:951px;top:193px;height:13px;background:#b1b1b1"></div>
<div class="vl" style="left:1011px;top:207px;height:464px"></div>
<div class="vl" style="left:1011px;top:193px;height:13px;background:#b1b1b1"></div>
<div class="vl" style="left:1071px;top:207px;height:464px"></div>
<div class="vl" style="left:1071px;top:193px;height:13px;background:#b1b1b1"></div>
<div class="vl" style="left:1131px;top:207px;height:464px"></div>
<div class="vl" style="left:1131px;top:193px;height:13px;background:#b1b1b1"></div>
<div class="vl" style="left:1191px;top:207px;height:464px"></div>
<div class="vl" style="left:1191px;top:193px;height:13px;background:#b1b1b1"></div>
<div class="vl" style="left:1251px;top:207px;height:464px"></div>
<div class="vl" style="left:1251px;top:193px;height:13px;background:#b1b1b1"></div>
<div class="hl" style="left:24px;top:234px;width:1236px"></div>
<div class="hl" style="left:0px;top:234px;width:24px;background:#b9b9b9"></div>
<div class="hl" style="left:24px;top:262px;width:1236px"></div>
<div class="hl" style="left:0px;top:262px;width:24px;background:#b9b9b9"></div>
<div class="hl" style="left:24px;top:290px;width:1236px"></div>
<div class="hl" style="left:0px;top:290px;width:24px;background:#b9b9b9"></div>
<div class="hl" style="left:24px;top:318px;width:1236px"></div>
<div class="hl" style="left:0px;top:318px;width:24px;background:#b9b9b9"></div>
<div class="hl" style="left:24px;top:346px;width:1236px"></div>
<div class="hl" style="left:0px;top:346px;width:24px;background:#b9b9b9"></div>
<div class="hl" style="left:24px;top:374px;width:1236px"></div>
<div class="hl" style="left:0px;top:374px;width:24px;background:#b9b9b9"></div>
<div class="hl" style="left:24px;top:402px;width:1236px"></div>
<div class="hl" style="left:0px;top:402px;width:24px;background:#b9b9b9"></div>
<div class="hl" style="left:24px;top:431px;width:1236px"></div>
<div class="hl" style="left:0px;top:431px;width:24px;background:#b9b9b9"></div>
<div class="hl" style="left:24px;top:459px;width:1236px"></div>
<div class="hl" style="left:0px;top:459px;width:24px;background:#b9b9b9"></div>
<div class="hl" style="left:24px;top:487px;width:1236px"></div>
<div class="hl" style="left:0px;top:487px;width:24px;background:#b9b9b9"></div>
<div class="hl" style="left:24px;top:515px;width:1236px"></div>
<div class="hl" style="left:0px;top:515px;width:24px;background:#b9b9b9"></div>
<div class="hl" style="left:24px;top:543px;width:1236px"></div>
<div class="hl" style="left:0px;top:543px;width:24px;background:#b9b9b9"></div>
<div class="hl" style="left:24px;top:559px;width:1236px"></div>
<div class="hl" style="left:0px;top:559px;width:24px;background:#b9b9b9"></div>
<div class="hl" style="left:24px;top:575px;width:1236px"></div>
<div class="hl" style="left:0px;top:575px;width:24px;background:#b9b9b9"></div>
<div class="hl" style="left:24px;top:591px;width:1236px"></div>
<div class="hl" style="left:0px;top:591px;width:24px;background:#b9b9b9"></div>
<div class="hl" style="left:24px;top:607px;width:1236px"></div>
<div class="hl" style="left:0px;top:607px;width:24px;background:#b9b9b9"></div>
<div class="hl" style="left:24px;top:623px;width:1236px"></div>
<div class="hl" style="left:0px;top:623px;width:24px;background:#b9b9b9"></div>
<div class="hl" style="left:24px;top:639px;width:1236px"></div>
<div class="hl" style="left:0px;top:639px;width:24px;background:#b9b9b9"></div>
<div class="hl" style="left:24px;top:655px;width:1236px"></div>
<div class="hl" style="left:0px;top:655px;width:24px;background:#b9b9b9"></div>
<div class="hl" style="left:24px;top:671px;width:1236px"></div>
<div class="hl" style="left:0px;top:671px;width:24px;background:#b9b9b9"></div>
<div class="vl" style="left:23.3px;top:206px;height:465px;background:#9b9b9b"></div>
<div class="ch" style="left:24px;width:215px">A</div>
<div class="ch" style="left:239px;width:109px">B</div>
<div class="a" style="left:348px;top:192px;width:98px;height:14px;background:#d2d2d2;border-bottom:2px solid #217346"></div>
<div class="ch" style="left:348px;width:98px">C</div>
<div class="ch" style="left:446px;width:98px">D</div>
<div class="ch" style="left:544px;width:107px">E</div>
<div class="ch" style="left:651px;width:60px">F</div>
<div class="ch" style="left:711px;width:60px">G</div>
<div class="ch" style="left:771px;width:60px">H</div>
<div class="ch" style="left:831px;width:60px">I</div>
<div class="ch" style="left:891px;width:60px">J</div>
<div class="ch" style="left:951px;width:60px">K</div>
<div class="ch" style="left:1011px;width:60px">L</div>
<div class="ch" style="left:1071px;width:60px">M</div>
<div class="ch" style="left:1131px;width:60px">N</div>
<div class="ch" style="left:1191px;width:60px">O</div>
<div class="rh" style="top:219.9px">1</div>
<div class="rh" style="top:247.9px">2</div>
<div class="rh" style="top:275.9px">3</div>
<div class="rh" style="top:303.9px">4</div>
<div class="rh" style="top:331.9px">5</div>
<div class="rh" style="top:359.9px">6</div>
<div class="rh" style="top:387.9px">7</div>
<div class="rh" style="top:416.9px">8</div>
<div class="a" style="left:0;top:432px;width:24px;height:27px;background:#d2d2d2;border-right:2px solid #217346"></div>
<div class="rh" style="top:444.5px">9</div>
<div class="rh" style="top:472.5px">10</div>
<div class="rh" style="top:500.5px">11</div>
<div class="rh" style="top:528.5px">12</div>
<div class="rh" style="top:544.5px">13</div>
<div class="rh" style="top:560.5px">14</div>
<div class="rh" style="top:576.5px">15</div>
<div class="rh" style="top:592.5px">16</div>
<div class="rh" style="top:608.5px">17</div>
<div class="rh" style="top:624.5px">18</div>
<div class="rh" style="top:640.5px">19</div>
<div class="rh" style="top:656.5px">20</div>
<svg class="a" style="left:12px;top:194.5px" width="9" height="9" viewBox="0 0 9 9"><path d="M9 0V8.500H0z" fill="#b9b9b9"/></svg>
<div class="a" style="left:240px;top:207px;width:304px;height:27px;background:#d7e3bc"></div>
<div class="cell" style="left:240.5px;width:109px;text-align:center;top:220.5px;font-weight:bold">Jan</div>
<div class="cell" style="left:349.5px;width:98px;text-align:center;top:220.5px;font-weight:bold">Feb</div>
<div class="cell" style="left:447.5px;width:98px;text-align:center;top:220.5px;font-weight:bold">Mar</div>
<div class="cell" style="left:26px;top:248.5px">Televisions</div>
<div class="cell" style="left:248px;top:248.5px">£</div>
<div class="num" style="left:239px;width:101px;top:248.5px">50,124.00</div>
<div class="cell" style="left:357px;top:248.5px">£</div>
<div class="num" style="left:348px;width:90px;top:248.5px">60,338.00</div>
<div class="cell" style="left:455px;top:248.5px">£</div>
<div class="num" style="left:446px;width:90px;top:248.5px">63,010.00</div>
<div class="cell" style="left:26px;top:276.5px">Magazines and Newspapers</div>
<div class="cell" style="left:248px;top:276.5px">£</div>
<div class="num" style="left:239px;width:101px;top:276.5px">27,373.00</div>
<div class="cell" style="left:357px;top:276.5px">£</div>
<div class="num" style="left:348px;width:90px;top:276.5px">57,194.00</div>
<div class="cell" style="left:455px;top:276.5px">£</div>
<div class="num" style="left:446px;width:90px;top:276.5px">29,848.00</div>
<div class="cell" style="left:26px;top:304.5px">Computers</div>
<div class="cell" style="left:248px;top:304.5px">£</div>
<div class="num" style="left:239px;width:101px;top:304.5px">80,551.00</div>
<div class="cell" style="left:357px;top:304.5px">£</div>
<div class="num" style="left:348px;width:90px;top:304.5px">92,216.00</div>
<div class="cell" style="left:455px;top:304.5px">£</div>
<div class="num" style="left:446px;width:90px;top:304.5px">34,428.00</div>
<div class="cell" style="left:26px;top:332.5px">Clothing</div>
<div class="cell" style="left:248px;top:332.5px">£</div>
<div class="num" style="left:239px;width:101px;top:332.5px">27,765.00</div>
<div class="cell" style="left:357px;top:332.5px">£</div>
<div class="num" style="left:348px;width:90px;top:332.5px">63,222.00</div>
<div class="cell" style="left:455px;top:332.5px">£</div>
<div class="num" style="left:446px;width:90px;top:332.5px">40,703.00</div>
<div class="cell" style="left:26px;top:360.5px">Cooking</div>
<div class="cell" style="left:248px;top:360.5px">£</div>
<div class="num" style="left:239px;width:101px;top:360.5px">82,567.00</div>
<div class="cell" style="left:357px;top:360.5px">£</div>
<div class="num" style="left:348px;width:90px;top:360.5px">43,900.00</div>
<div class="cell" style="left:455px;top:360.5px">£</div>
<div class="num" style="left:446px;width:90px;top:360.5px">69,890.00</div>
<div class="cell" style="left:27px;top:416.5px;font-weight:bold">Total:</div>
<div class="cell" style="left:248px;top:416.5px">£</div>
<div class="num" style="left:239px;width:101px;top:416.5px">268,380.00</div>
<div class="cell" style="left:357px;top:416.5px">£</div>
<div class="num" style="left:348px;width:90px;top:416.5px">316,870.00</div>
<div class="cell" style="left:455px;top:416.5px">£</div>
<div class="num" style="left:446px;width:90px;top:416.5px">237,879.00</div>
<div class="a" style="left:238px;top:402px;width:307px;height:30px;border:2px solid #000;border-right:none"></div>
<div class="a" style="left:347px;top:402px;width:2px;height:30px;background:#000"></div>
<div class="a" style="left:445px;top:402px;width:2px;height:30px;background:#000"></div>
<div class="a" style="left:347.5px;top:430px;width:100.5px;height:30.5px;border:2px solid #217346"></div>
<div class="a" style="left:444px;top:457px;width:6px;height:6px;background:#217346;border:1px solid #fff"></div>
<div class="a" style="left:1263.5px;top:193px;width:13px;height:13.5px;background:#fff;border:1px solid #ababab"></div>
<svg class="a" style="left:1266.5px;top:197.5px" width="7" height="5" viewBox="0 0 7 5"><path d="M0 4.500L3.500 .5L7 4.500z" fill="#666"/></svg>
<div class="a" style="left:1263.5px;top:206.5px;width:13px;height:428px;background:#fff;border:1px solid #ababab"></div>
<div class="a" style="left:1259.2px;top:206px;width:1.2px;height:466px;background:#adadad;"></div>
<div class="a" style="left:1263.5px;top:634.5px;width:13px;height:25px;background:#d0d0d0;"></div>
<div class="a" style="left:1263.5px;top:659.5px;width:13px;height:12px;background:#fff;border:1px solid #ababab"></div>
<svg class="a" style="left:1266.5px;top:663.5px" width="7" height="5" viewBox="0 0 7 5"><path d="M0 .5h7L3.500 4.500z" fill="#666"/></svg>
<div class="a" style="left:0px;top:671px;width:1280px;height:27px;background:#e6e6e6;"></div>
<div class="a" style="left:0px;top:671px;width:1260px;height:1px;background:#9b9b9b;"></div>
<div class="a" style="left:0px;top:697px;width:1280px;height:1px;background:#d6d6d6;"></div>
<div class="a" style="left:0px;top:698px;width:1280px;height:19px;background:#f1f1f1;"></div>
<div class="a" style="left:0px;top:717px;width:1280px;height:3px;background:#000;"></div>
<svg class="a" style="left:25.5px;top:680px" width="5" height="8" viewBox="0 0 5 8"><path d="M4.500 .5L.5 4l4 3.500z" fill="#c2c2c2"/></svg>
<svg class="a" style="left:51.5px;top:680px" width="5" height="8" viewBox="0 0 5 8"><path d="M.5 .5L4.500 4l-4 3.500z" fill="#c2c2c2"/></svg>
<div class="a" style="left:94px;top:675px;width:1px;height:19px;background:#ababab;"></div>
<div class="a" style="left:160px;top:675px;width:1px;height:19px;background:#ababab;"></div>
<div class="t" style="left:106.3px;top:677.9px;font-size:12.5px;color:#555;letter-spacing:-0.2px;">London</div>
<div class="t" style="left:173.5px;top:677.9px;font-size:12.5px;color:#555;letter-spacing:-0.18px;">Bristol</div>
<div class="a" style="left:220.5px;top:672px;width:91.5px;height:22px;background:#fff;"></div>
<div class="a" style="left:220.5px;top:692px;width:91.5px;height:2px;background:#217346;"></div>
<div class="a" style="left:220.5px;top:672px;width:1px;height:21px;background:#c6c6c6;"></div>
<div class="a" style="left:311px;top:672px;width:1px;height:21px;background:#c6c6c6;"></div>
<div class="t" style="left:232px;top:677.9px;font-size:12.5px;color:#111;letter-spacing:-0.28px;font-weight:700;">Portsmouth</div>
<div class="a" style="left:312px;top:672px;width:104.5px;height:25px;background:#e1e1e1;"></div>
<div class="t" style="left:325.5px;top:677.9px;font-size:12.5px;color:#555;letter-spacing:-0.21px;">Milton Keynes</div>
<div class="a" style="left:416.5px;top:672px;width:47.0px;height:22px;background:#fff;"></div>
<div class="a" style="left:416.5px;top:692px;width:47.0px;height:2px;background:#217346;"></div>
<div class="a" style="left:416.5px;top:672px;width:1px;height:21px;background:#c6c6c6;"></div>
<div class="a" style="left:462.5px;top:672px;width:1px;height:21px;background:#c6c6c6;"></div>
<div class="t" style="left:427.5px;top:677.9px;font-size:12.5px;color:#111;letter-spacing:0.05px;font-weight:700;">Hull</div>
<div class="a" style="left:463px;top:672px;width:73.5px;height:22px;background:#fff;"></div>
<div class="a" style="left:463px;top:692px;width:73.5px;height:2px;background:#217346;"></div>
<div class="a" style="left:463px;top:672px;width:1px;height:21px;background:#c6c6c6;"></div>
<div class="a" style="left:535.5px;top:672px;width:1px;height:21px;background:#c6c6c6;"></div>
<div class="t" style="left:474.3px;top:677.9px;font-size:12.5px;color:#217346;letter-spacing:-0.12px;font-weight:700;">Sheffield</div>
<svg class="a" style="left:568px;top:677px" width="15" height="15" viewBox="0 0 15 15"><circle cx="7.500" cy="7.500" r="6.500" fill="none" stroke="#8a8a8a" stroke-width="1.100"/><path d="M7.500 4v7M4 7.500h7" stroke="#8a8a8a" stroke-width="1.100"/></svg>
<div class="a" style="left:784px;top:678.5px;width:13px;height:13px;background:#fff;border:1px solid #ababab"></div>
<svg class="a" style="left:788px;top:682px" width="5" height="7" viewBox="0 0 5 7"><path d="M4.500 0L.5 3.500l4 3.500z" fill="#666"/></svg>
<div class="a" style="left:798px;top:678.5px;width:418px;height:13px;background:#fff;border:1px solid #ababab"></div>
<div class="a" style="left:1216px;top:678.5px;width:30px;height:13px;background:#d0d0d0;"></div>
<div class="a" style="left:1246.5px;top:678.5px;width:13px;height:13px;background:#fff;border:1px solid #ababab"></div>
<svg class="a" style="left:1251px;top:682px" width="5" height="7" viewBox="0 0 5 7"><path d="M.5 0L4.500 3.500l-4 3.500z" fill="#666"/></svg>
<div class="a" style="left:775px;top:680.5px;width:1.5px;height:1.5px;background:#a8a8a8;"></div>
<div class="a" style="left:775px;top:684px;width:1.5px;height:1.5px;background:#a8a8a8;"></div>
<div class="a" style="left:775px;top:687.5px;width:1.5px;height:1.5px;background:#a8a8a8;"></div>
<div class="t" style="left:6.8px;top:702.1px;font-size:12px;color:#555;letter-spacing:-1.14px;">Ready</div>
<svg class="a" style="left:55px;top:701px" width="12" height="12" viewBox="0 0 12 12"><circle cx="2.800" cy="2.800" r="2.600" fill="#8a8a8a"/><rect x="1" y="6" width="10.500" height="6" fill="none" stroke="#9a9a9a" stroke-width="1"/><path d="M6 1.500h5.500M4.500 6v6M8 6v6M1 9h10.500" stroke="#9a9a9a" stroke-width="1"/></svg>
<div class="a" style="left:1007px;top:698px;width:35px;height:19px;background:#c8c8c8;"></div>
<svg class="a" style="left:1018px;top:701px" width="12" height="12" viewBox="0 0 12 12"><rect x=".6" y=".6" width="10.800" height="10.800" fill="none" stroke="#666" stroke-width="1.100"/><path d="M4.200 .6v10.800M7.800 .6v10.800M.6 4.200h10.800M.6 7.800h10.800" stroke="#666" stroke-width="1"/></svg>
<svg class="a" style="left:1053px;top:701px" width="14" height="12" viewBox="0 0 14 12"><rect x=".6" y=".6" width="12.800" height="10.800" fill="none" stroke="#777" stroke-width="1.100"/><rect x="3.500" y="2.800" width="7" height="6.800" fill="none" stroke="#777" stroke-width="1"/><path d="M5 5h4M5 7h4" stroke="#777" stroke-width=".9"/></svg>
<svg class="a" style="left:1089px;top:701px" width="13" height="12" viewBox="0 0 13 12"><rect x=".6" y=".6" width="11.800" height="10.800" fill="none" stroke="#777" stroke-width="1.100"/><path d="M4.500 .6v5.500M8 .6v5.500M.6 6.500h11.800" stroke="#777" stroke-width="1"/></svg>
<div class="a" style="left:1118.5px;top:706.8px;width:5.5px;height:1.6px;background:#555;"></div>
<div class="a" style="left:1127.5px;top:707.3px;width:93px;height:1px;background:#a0a0a0;"></div>
<div class="a" style="left:1172px;top:702px;width:3.6px;height:11px;background:#555;"></div>
<div class="a" style="left:1225px;top:706.8px;width:7px;height:1.6px;background:#555;"></div>
<div class="a" style="left:1227.7px;top:704px;width:1.6px;height:7px;background:#555;"></div>
<div class="t" style="left:1246.8px;top:701.9px;font-size:12px;color:#555;letter-spacing:-1.55px;">100%</div>
<div class="a" style="left:483.5px;top:432px;width:132.5px;height:253.5px;background:#fff;box-shadow:2px 2px 4px rgba(0,0,0,.28);border:1px solid #c6c6c6"></div>
<div class="a" style="left:485px;top:568px;width:129.5px;height:23px;background:#c6c6c6;"></div>
<div class="t" style="left:513.8px;top:438.9px;font-size:12.5px;color:#4a4a4a;letter-spacing:-0.66px;">Insert...</div>
<div class="a" style="left:513.8px;top:450.2px;width:2.8px;height:1px;background:#4a4a4a;"></div>
<div class="t" style="left:513.8px;top:461.2px;font-size:12.5px;color:#4a4a4a;letter-spacing:-0.82px;">Delete</div>
<div class="a" style="left:513.8px;top:472.5px;width:8.2px;height:1px;background:#4a4a4a;"></div>
<div class="t" style="left:513.8px;top:483.6px;font-size:12.5px;color:#4a4a4a;letter-spacing:-1.17px;">Rename</div>
<div class="a" style="left:513.8px;top:494.9px;width:7.9px;height:1px;background:#4a4a4a;"></div>
<div class="t" style="left:513.8px;top:505.9px;font-size:12.5px;color:#4a4a4a;letter-spacing:-0.57px;">Move or Copy...</div>
<div class="a" style="left:513.8px;top:517.2px;width:9.8px;height:1px;background:#4a4a4a;"></div>
<div class="t" style="left:513.8px;top:528.4px;font-size:12.5px;color:#4a4a4a;letter-spacing:-0.89px;">View Code</div>
<div class="a" style="left:513.8px;top:539.7px;width:7.4px;height:1px;background:#4a4a4a;"></div>
<div class="t" style="left:513.8px;top:550.9px;font-size:12.5px;color:#b4b4b4;letter-spacing:-0.75px;">Protect Sheet...</div>
<div class="a" style="left:513.8px;top:562.2px;width:7.6px;height:1px;background:#b4b4b4;"></div>
<div class="t" style="left:513.8px;top:573.6px;font-size:12.5px;color:#4a4a4a;letter-spacing:-0.53px;">Tab Color</div>
<div class="a" style="left:513.8px;top:584.9px;width:7.1px;height:1px;background:#4a4a4a;"></div>
<div class="t" style="left:513.8px;top:597.7px;font-size:12.5px;color:#4a4a4a;letter-spacing:-0.5px;">Hide</div>
<div class="a" style="left:513.8px;top:609.0px;width:8.5px;height:1px;background:#4a4a4a;"></div>
<div class="t" style="left:513.8px;top:620.2px;font-size:12.5px;color:#b4b4b4;letter-spacing:-0.7px;">Unhide...</div>
<div class="a" style="left:513.8px;top:631.5px;width:8.3px;height:1px;background:#b4b4b4;"></div>
<div class="a" style="left:514px;top:637.5px;width:100px;height:1px;background:#e2e2e2;"></div>
<div class="t" style="left:513.8px;top:644.5px;font-size:12.5px;color:#4a4a4a;letter-spacing:-0.84px;">Select All Sheets</div>
<div class="a" style="left:513.8px;top:655.8px;width:7.5px;height:1px;background:#4a4a4a;"></div>
<div class="t" style="left:513.8px;top:667.1px;font-size:12.5px;color:#4a4a4a;letter-spacing:-0.83px;">Ungroup Sheets</div>
<div class="a" style="left:522.0px;top:678.4px;width:6.1px;height:1px;background:#4a4a4a;"></div>
<svg class="a" style="left:602px;top:575.5px" width="5" height="8" viewBox="0 0 5 8"><path d="M.5 .5L4.500 4l-4 3.500z" fill="#666"/></svg>
<svg class="a" style="left:488px;top:460px" width="16" height="15" viewBox="0 0 16 15"><rect x=".6" y=".6" width="12" height="10.500" fill="#fff" stroke="#8a8a8a" stroke-width="1"/><path d="M.6 3.800h12M.6 7.200h12M4.600 .6v10.500M8.600 .6v10.500" stroke="#9a9a9a" stroke-width="1"/><path d="M7 6.500l7.500 7.500M14.500 6.500L7 14" stroke="#d8553a" stroke-width="1.800"/></svg>
<svg class="a" style="left:488px;top:527px" width="16" height="15" viewBox="0 0 16 15"><path d="M3 1h11.500v11h-5" fill="none" stroke="#8a8a8a" stroke-width="1.100"/><path d="M3 3.300h11.500" stroke="#666" stroke-width="1.600"/><circle cx="4.800" cy="9" r="3.400" fill="#fff" stroke="#555" stroke-width="1.300"/><path d="M7.300 11.500l3 3" stroke="#555" stroke-width="1.600"/><path d="M10.500 6.500h2.500M10.500 9h2.500" stroke="#9a9a9a" stroke-width="1"/></svg>
<svg class="a" style="left:488px;top:549.5px" width="16" height="15" viewBox="0 0 16 15"><rect x=".6" y=".6" width="13" height="12" fill="none" stroke="#cfcfcf" stroke-width="1"/><path d="M.6 4.600h13M.6 8.600h13M5 .6v12M9.300 .6v12" stroke="#cfcfcf" stroke-width="1"/><rect x="8.500" y="8.500" width="6.500" height="5.500" fill="#d6d6d6"/><path d="M10 8.500v-1.500a1.700 1.700 0 0 1 3.400 0v1.500" fill="none" stroke="#cfcfcf" stroke-width="1"/></svg>
<div class="a" style="left:616px;top:523.5px;width:161px;height:191px;background:#fff;box-shadow:2px 2px 4px rgba(0,0,0,.28);border:1px solid #c6c6c6"></div>
<div class="a" style="left:617px;top:524.5px;width:159px;height:21.5px;background:#e4e4e4;"></div>
<div class="t" style="left:624.5px;top:530.7px;font-size:11.5px;color:#5a5a5a;letter-spacing:-0.47px;font-weight:700;">Theme Colors</div>
<div class="a" style="left:619px;top:549.5px;width:11px;height:11px;background:#FFFFFF;border:1px solid #e2e2e2"></div>
<div class="a" style="left:619px;top:566.0px;width:11px;height:12px;background:#F2F2F2;"></div>
<div class="a" style="left:619px;top:577.9px;width:11px;height:12px;background:#D8D8D8;"></div>
<div class="a" style="left:619px;top:589.8px;width:11px;height:12px;background:#BFBFBF;"></div>
<div class="a" style="left:619px;top:601.7px;width:11px;height:12px;background:#A5A5A5;"></div>
<div class="a" style="left:619px;top:613.6px;width:11px;height:12px;background:#7F7F7F;"></div>
<div class="a" style="left:635px;top:549.5px;width:11px;height:11px;background:#000000;"></div>
<div class="a" style="left:635px;top:566.0px;width:11px;height:12px;background:#7F7F7F;"></div>
<div class="a" style="left:635px;top:577.9px;width:11px;height:12px;background:#595959;"></div>
<div class="a" style="left:635px;top:589.8px;width:11px;height:12px;background:#3F3F3F;"></div>
<div class="a" style="left:635px;top:601.7px;width:11px;height:12px;background:#262626;"></div>
<div class="a" style="left:635px;top:613.6px;width:11px;height:12px;background:#0C0C0C;"></div>
<div class="a" style="left:651px;top:549.5px;width:11px;height:11px;background:#EEECE1;"></div>
<div class="a" style="left:651px;top:566.0px;width:11px;height:12px;background:#DDD9C3;"></div>
<div class="a" style="left:651px;top:577.9px;width:11px;height:12px;background:#C4BD97;"></div>
<div class="a" style="left:651px;top:589.8px;width:11px;height:12px;background:#938953;"></div>
<div class="a" style="left:651px;top:601.7px;width:11px;height:12px;background:#494429;"></div>
<div class="a" style="left:651px;top:613.6px;width:11px;height:12px;background:#1D1B10;"></div>
<div class="a" style="left:667px;top:549.5px;width:11px;height:11px;background:#1F497D;"></div>
<div class="a" style="left:667px;top:566.0px;width:11px;height:12px;background:#C6D9F0;"></div>
<div class="a" style="left:667px;top:577.9px;width:11px;height:12px;background:#8DB3E2;"></div>
<div class="a" style="left:667px;top:589.8px;width:11px;height:12px;background:#548DD4;"></div>
<div class="a" style="left:667px;top:601.7px;width:11px;height:12px;background:#17365D;"></div>
<div class="a" style="left:667px;top:613.6px;width:11px;height:12px;background:#0F243E;"></div>
<div class="a" style="left:683px;top:549.5px;width:11px;height:11px;background:#4F81BD;"></div>
<div class="a" style="left:683px;top:566.0px;width:11px;height:12px;background:#DBE5F1;"></div>
<div class="a" style="left:683px;top:577.9px;width:11px;height:12px;background:#B8CCE4;"></div>
<div class="a" style="left:683px;top:589.8px;width:11px;height:12px;background:#95B3D7;"></div>
<div class="a" style="left:683px;top:601.7px;width:11px;height:12px;background:#366092;"></div>
<div class="a" style="left:683px;top:613.6px;width:11px;height:12px;background:#244061;"></div>
<div class="a" style="left:699px;top:549.5px;width:11px;height:11px;background:#C0504D;"></div>
<div class="a" style="left:699px;top:566.0px;width:11px;height:12px;background:#F2DCDB;"></div>
<div class="a" style="left:699px;top:577.9px;width:11px;height:12px;background:#E5B9B7;"></div>
<div class="a" style="left:699px;top:589.8px;width:11px;height:12px;background:#D99694;"></div>
<div class="a" style="left:699px;top:601.7px;width:11px;height:12px;background:#953734;"></div>
<div class="a" style="left:699px;top:613.6px;width:11px;height:12px;background:#632423;"></div>
<div class="a" style="left:715px;top:549.5px;width:11px;height:11px;background:#9BBB59;"></div>
<div class="a" style="left:715px;top:566.0px;width:11px;height:12px;background:#EBF1DD;"></div>
<div class="a" style="left:715px;top:577.9px;width:11px;height:12px;background:#D7E3BC;"></div>
<div class="a" style="left:715px;top:589.8px;width:11px;height:12px;background:#C3D69B;"></div>
<div class="a" style="left:715px;top:601.7px;width:11px;height:12px;background:#76923C;"></div>
<div class="a" style="left:715px;top:613.6px;width:11px;height:12px;background:#4F6128;"></div>
<div class="a" style="left:731px;top:549.5px;width:11px;height:11px;background:#8064A2;"></div>
<div class="a" style="left:731px;top:566.0px;width:11px;height:12px;background:#E5E0EC;"></div>
<div class="a" style="left:731px;top:577.9px;width:11px;height:12px;background:#CCC1D9;"></div>
<div class="a" style="left:731px;top:589.8px;width:11px;height:12px;background:#B2A2C7;"></div>
<div class="a" style="left:731px;top:601.7px;width:11px;height:12px;background:#5F497A;"></div>
<div class="a" style="left:731px;top:613.6px;width:11px;height:12px;background:#3F3151;"></div>
<div class="a" style="left:747px;top:549.5px;width:11px;height:11px;background:#4BACC6;"></div>
<div class="a" style="left:747px;top:566.0px;width:11px;height:12px;background:#DBEEF3;"></div>
<div class="a" style="left:747px;top:577.9px;width:11px;height:12px;background:#B7DDE8;"></div>
<div class="a" style="left:747px;top:589.8px;width:11px;height:12px;background:#92CDDC;"></div>
<div class="a" style="left:747px;top:601.7px;width:11px;height:12px;background:#31859B;"></div>
<div class="a" style="left:747px;top:613.6px;width:11px;height:12px;background:#205867;"></div>
<div class="a" style="left:763px;top:549.5px;width:11px;height:11px;background:#F79646;"></div>
<div class="a" style="left:763px;top:566.0px;width:11px;height:12px;background:#FDEADA;"></div>
<div class="a" style="left:763px;top:577.9px;width:11px;height:12px;background:#FBD5B5;"></div>
<div class="a" style="left:763px;top:589.8px;width:11px;height:12px;background:#FAC08F;"></div>
<div class="a" style="left:763px;top:601.7px;width:11px;height:12px;background:#E36C09;"></div>
<div class="a" style="left:763px;top:613.6px;width:11px;height:12px;background:#974806;"></div>
<div class="a" style="left:617px;top:629px;width:159px;height:21.5px;background:#e4e4e4;"></div>
<div class="t" style="left:624.5px;top:634.7px;font-size:11.5px;color:#5a5a5a;letter-spacing:-0.53px;font-weight:700;">Standard Colors</div>
<div class="a" style="left:619px;top:653.5px;width:11px;height:11px;background:#C00000;"></div>
<div class="a" style="left:635px;top:653.5px;width:11px;height:11px;background:#FF0000;"></div>
<div class="a" style="left:651px;top:653.5px;width:11px;height:11px;background:#FFC000;"></div>
<div class="a" style="left:667px;top:653.5px;width:11px;height:11px;background:#FFFF00;"></div>
<div class="a" style="left:683px;top:653.5px;width:11px;height:11px;background:#92D050;"></div>
<div class="a" style="left:699px;top:653.5px;width:11px;height:11px;background:#00B050;"></div>
<div class="a" style="left:715px;top:653.5px;width:11px;height:11px;background:#00B0F0;"></div>
<div class="a" style="left:731px;top:653.5px;width:11px;height:11px;background:#0070C0;"></div>
<div class="a" style="left:747px;top:653.5px;width:11px;height:11px;background:#002060;"></div>
<div class="a" style="left:763px;top:653.5px;width:11px;height:11px;background:#7030A0;"></div>
<div class="a" style="left:619px;top:669px;width:18px;height:17.5px;background:#c9c9c9;border:1px solid #a6a6a6"></div>
<div class="t" style="left:646.8px;top:671.7px;font-size:12.5px;color:#4a4a4a;letter-spacing:-0.52px;">No Color</div>
<div class="a" style="left:646.8px;top:683.2px;width:8.5px;height:1px;background:#444;"></div>
<div class="a" style="left:617px;top:689.5px;width:159px;height:1px;background:#e2e2e2;"></div>
<svg class="a" style="left:620px;top:694.5px" width="15" height="15" viewBox="0 0 15 15"><circle cx="7.500" cy="7.500" r="7" fill="#e9e9e9"/><path d="M7.500 7.500L7.500 .5A7 7 0 0 1 14.200 5.400z" fill="#d9653a"/><path d="M7.500 7.500L14.200 5.400A7 7 0 0 1 11.600 13.200z" fill="#7aa3c9"/><path d="M7.500 7.500L11.600 13.200A7 7 0 0 1 3.400 13.200z" fill="#4f81bd"/><path d="M7.500 7.500L3.400 13.200A7 7 0 0 1 .8 5.400z" fill="#e8c466"/><path d="M7.500 7.500L.8 5.400A7 7 0 0 1 7.500 .5z" fill="#e39a5f"/></svg>
<div class="t" style="left:645.8px;top:696.1px;font-size:12.5px;color:#4a4a4a;letter-spacing:-0.7px;">More Colors...</div>
<div class="a" style="left:645.8px;top:707.6px;width:10px;height:1px;background:#444;"></div>
<svg class="a" style="left:606px;top:574px" width="13" height="20" viewBox="0 0 13 20"><path d="M1 1v15l3.600-3.400 2.500 5.800 2.300-1-2.500-5.600h5z" fill="#fff" stroke="#000" stroke-width="1.100" stroke-linejoin="round"/></svg>
</body></html>
